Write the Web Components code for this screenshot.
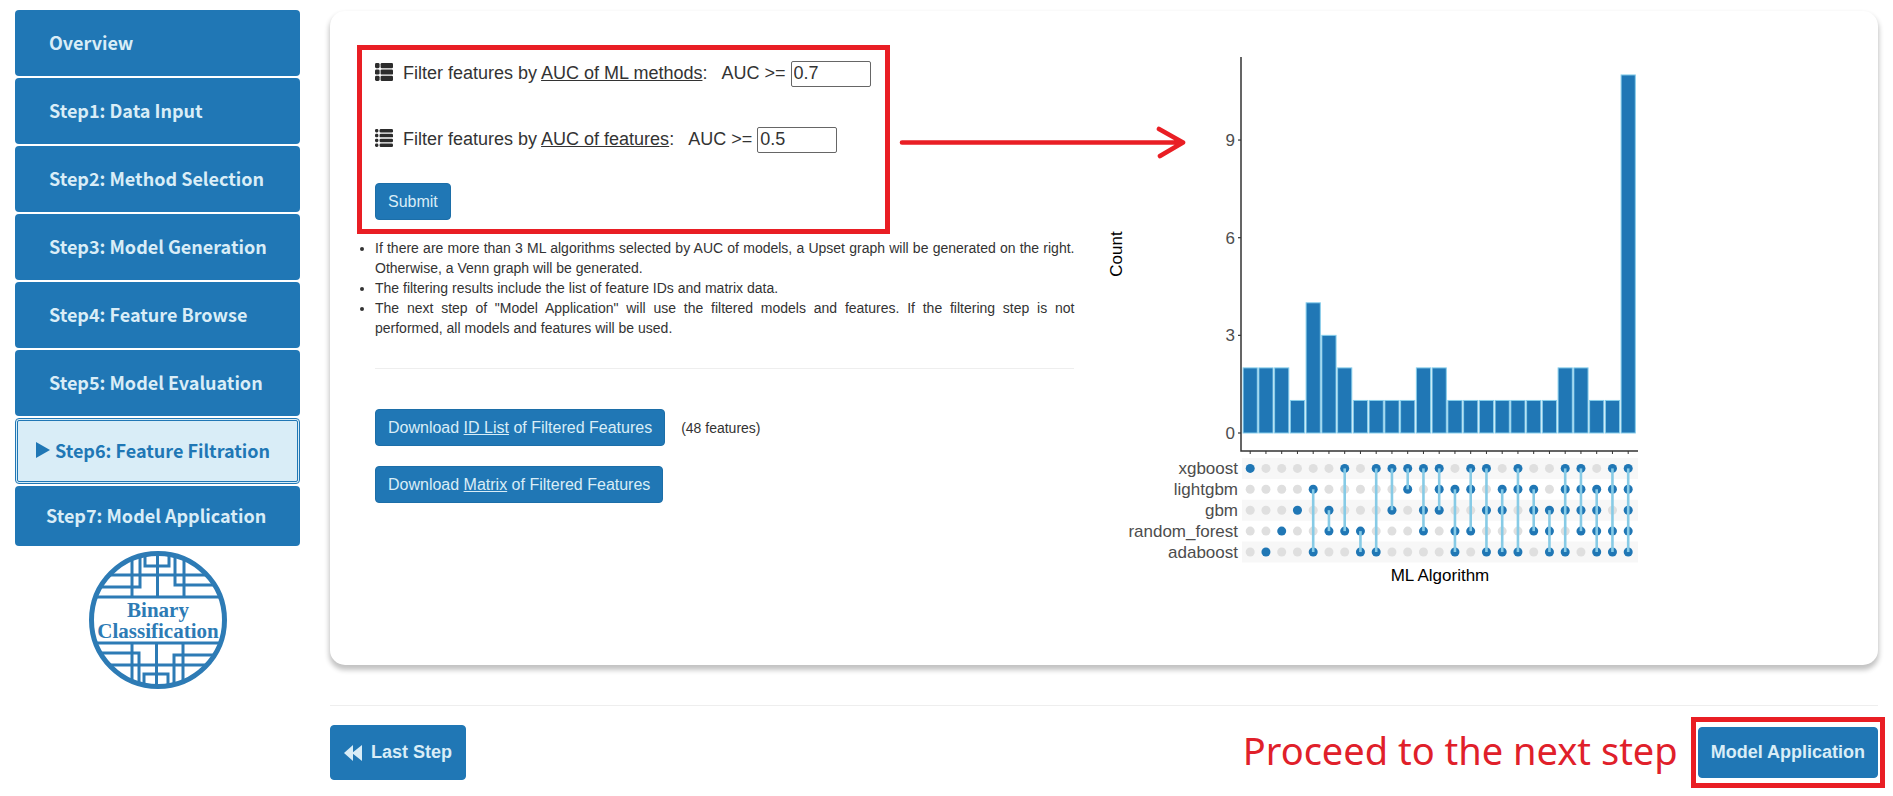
<!DOCTYPE html>
<html lang="en">
<head>
<meta charset="utf-8">
<title>Feature Filtration</title>
<style>
:root{--blue:#2077b5;--pale:#d9edf7;--mark:#e91e24}
body{margin:0;background:#fff;color:#333;font:14px/20px "Liberation Sans",Arial,sans-serif}
</style>
</head>
<body>
<filtration-page></filtration-page>

<script>
const define = (name, html, setup) => {
  const template = document.createElement('template');
  template.innerHTML = html;
  customElements.define(name, class extends HTMLElement {
    constructor() {
      super();
      this.attachShadow({ mode: 'open' }).append(template.content.cloneNode(true));
    }
    connectedCallback() { if (setup) setup(this, this.shadowRoot); }
  });
};

/* One step of the side navigation */
define('step-link', `
<style>
:host{display:block}
a{box-sizing:border-box;display:flex;align-items:center;height:66px;padding:0 34px 2px;border-radius:4px;background:var(--blue);color:var(--pale);font:bold 18px/28px "Noto Sans CJK SC",sans-serif;text-decoration:none;white-space:nowrap}
svg{display:none;flex:none}
:host([active]) a{background:var(--pale);color:var(--blue);border:3px double var(--blue);padding:0 18px 2px;gap:5px}
:host([active]) svg{display:block}
:host([last]) a{height:60px;padding:0 31px 2px}
</style>
<a href="#"><svg width="14" height="16" aria-hidden="true"><path d="M0 0L14 8L0 16Z" fill="currentColor"/></svg><slot></slot></a>`);

/* Round lattice emblem */
define('lattice-logo', `
<style>
:host{display:block}
svg{display:block;margin:auto}
text{font:bold 21px "Liberation Serif",serif;fill:#2d7bb5;text-anchor:middle}
</style>
<svg width="138" height="138" viewBox="0 0 138 138" role="img" aria-label="Binary Classification">
<defs><clipPath id="c"><circle cx="69" cy="69" r="67"/></clipPath></defs>
<g fill="none" stroke="#2d7bb5" stroke-width="3" clip-path="url(#c)">
<path d="M0 46H138M0 92H138"/>
<path d="M15 24H123M68.500 0V46M43 0V46M95 0V46"/>
<path d="M56 0V15H80V0M51 0V36H0M86 0V34H138"/>
<path d="M15 114H123M67.500 92V138M43 92V138M94 92V138"/>
<path d="M55 138V123H79V138M50 138V102H0M85 138V104H138"/>
</g>
<circle cx="69" cy="69" r="66.500" fill="none" stroke="#2d7bb5" stroke-width="5"/>
<text x="69" y="66">Binary</text>
<text x="69" y="87">Classification</text>
</svg>`);

/* Solid button; the size attribute selects the large bold form */
define('app-button', `
<style>
:host{display:block}
button{display:flex;align-items:center;justify-content:center;margin:0;border:1px solid #1c6ea8;border-radius:4px;background:var(--blue);color:var(--pale);font:16px/23px "Liberation Sans",Arial,sans-serif;padding:6px 12px;white-space:nowrap;cursor:pointer}
:host([size=large]) button{font-weight:bold;font-size:18px;line-height:25px;padding:12px 12px;border-color:var(--blue)}
:host([size=wide]) button{font-weight:bold;font-size:18px;line-height:25px;padding:14px 13px;border-color:var(--blue)}
</style>
<button type="button"><slot></slot></button>`);

/* Threshold row: icon, caption and number box */
define('auc-filter', `
<style>
:host{display:flex;align-items:center;font-size:18px;line-height:24px;white-space:nowrap}
svg{width:18px;height:18px;margin-right:10px;margin-bottom:4px;fill:#2c2c2c;flex:none}
label{margin-right:5px;margin-bottom:2px}
input{box-sizing:border-box;width:80px;height:26px;margin:0;padding:0 2px 2px;border:1px solid #666;border-radius:2px;background:#fff;color:#333;font:18px/22px "Liberation Sans",Arial,sans-serif}
</style>
<svg viewBox="0 0 18 18" aria-hidden="true"></svg>
<label for="v">Filter features by <u></u>: &nbsp; AUC &gt;=</label><input id="v" type="text">`,
(host, root) => {
  root.querySelector('u').textContent = host.getAttribute('measure');
  root.querySelector('input').value = host.getAttribute('value');
  const rows = +host.getAttribute('rows');
  const h = rows === 3 ? 5.2 : 3.5;
  const step = (18 - h) / (rows - 1);
  let shapes = '';
  for (let i = 0; i < rows; i++) {
    shapes += `<rect x="0" y="${i * step}" width="${rows === 3 ? 4.6 : 3.4}" height="${h}" rx="1.4"/><rect x="${rows === 3 ? 5.6 : 4.6}" y="${i * step}" width="${rows === 3 ? 12.4 : 13.4}" height="${h}" rx="1.2"/>`;
  }
  root.querySelector('svg').innerHTML = shapes;
});

/* UpSet plot: intersection sizes above, set membership below */
define('upset-plot', `
<style>
:host{display:block}
svg{display:block;max-width:100%}
text{font:17px "Liberation Sans",Arial,sans-serif;fill:#4d4d4d}
.title{fill:#000;text-anchor:middle}
.end{text-anchor:end}
</style>
<svg width="560" height="590" viewBox="0 0 560 590" role="img" aria-label="Upset plot of ML algorithms"></svg>`,
(host, root) => {
  const sets = ['xgboost', 'lightgbm', 'gbm', 'random_forest', 'adaboost'];
  const data = '0:2 4:2 3:2 2:1 14:4 23:3 03:2 34:1 04:1 02:1 01:1 023:2 012:2 134:1 013:1 024:1 124:1 014:1 123:1 234:1 0124:2 0123:2 1234:1 0134:1 01234:11'
    .split(' ').map(s => s.split(':'));
  const cx = i => 146.2 + i * 15.75, cy = j => 423.4 + j * 20.9;
  const base = 388, unit = 32.55;
  let s = '';
  data.forEach(([, n], i) => {
    s += `<rect x="${cx(i) - 7.1}" y="${base - n * unit}" width="14.2" height="${n * unit}" fill="#2077b5" stroke="#87ceeb" stroke-width="1"/>`;
  });
  s += '<path d="M137 12V406H534" fill="none" stroke="#333" stroke-width="1.5"/>';
  [0, 3, 6, 9].forEach(v => {
    const y = base - v * unit;
    s += `<path d="M134 ${y}H137" stroke="#333" stroke-width="1.2"/><text class="end" x="131" y="${y + 6}">${v}</text>`;
  });
  [0, 2, 4].forEach(j => { s += `<rect x="138" y="${cy(j) - 10.5}" width="396" height="21" fill="#f7f7f7"/>`; });
  sets.forEach((name, j) => { s += `<text class="end" x="134" y="${cy(j) + 6}">${name}</text>`; });
  data.forEach(([members], i) => {
    s += `<path d="M${cx(i)} 406V409" stroke="#333"/>`;
    sets.forEach((_, j) => {
      const on = members.includes(j);
      s += `<circle cx="${cx(i)}" cy="${cy(j)}" r="4.5" fill="${on ? '#2077b5' : '#dfdfdf'}"/>`;
    });
    if (members.length > 1) {
      s += `<path d="M${cx(i)} ${cy(+members[0])}V${cy(+members[members.length - 1])}" stroke="#87cbe6" stroke-width="2.6"/>`;
    }
  });
  s += '<text class="title" x="336" y="536">ML Algorithm</text>';
  s += '<text class="title" transform="translate(18 209) rotate(-90)">Count</text>';
  root.querySelector('svg').innerHTML = s;
});

/* White rounded card with the two-column body */
define('content-card', `
<style>
:host{position:relative;display:grid;grid-template-columns:699fr 743fr;gap:30px;padding:34px 30px 30px 45px;border-radius:15px;background:#fff;box-shadow:0 4px 5px 1px rgba(0,0,0,.24)}
</style>
<slot></slot>`);

/* Red frame that draws attention to its content */
define('mark-frame', `
<style>
:host{display:block;box-sizing:border-box;width:fit-content;border:5px solid var(--mark)}
</style>
<slot></slot>`);

define('filtration-page', `
<style>
:host{display:grid;grid-template-columns:315px minmax(0,1fr)}
nav{padding:10px 15px;display:flex;flex-direction:column;gap:2px}
lattice-logo{margin-top:3px}
main{padding:11px 15px 0}
.filters{margin-left:-18px;padding:11px 14px 9px 13px}
auc-filter + auc-filter{margin-top:40px}
.submit{width:fit-content;margin-top:30px}
ul{margin:4px 0 0;padding:0;text-align:justify}
hr{border:0;border-top:1px solid #eee;margin:30px 0 40px}
.row{display:flex;align-items:center;gap:16px;margin-bottom:20px}
.arrow{position:absolute;left:568px;top:114px}
.divider{margin:40px 0 11px}
footer{display:flex;align-items:center}
.hint{margin:0 13px 6px auto;color:#e0202a;font:38px/48px "Noto Sans",sans-serif;white-space:nowrap}
.next{margin-right:-7px;padding:5px 2px}
.rewind{margin-right:9px}
</style>
<nav aria-label="Steps">
<step-link>Overview</step-link>
<step-link>Step1: Data Input</step-link>
<step-link>Step2: Method Selection</step-link>
<step-link>Step3: Model Generation</step-link>
<step-link>Step4: Feature Browse</step-link>
<step-link>Step5: Model Evaluation</step-link>
<step-link active>Step6: Feature Filtration</step-link>
<step-link last>Step7: Model Application</step-link>
<lattice-logo></lattice-logo>
</nav>
<main>
<content-card>
<section>
<mark-frame class="filters">
<auc-filter measure="AUC of ML methods" value="0.7" rows="3"></auc-filter>
<auc-filter measure="AUC of features" value="0.5" rows="4"></auc-filter>
<app-button class="submit">Submit</app-button>
</mark-frame>
<ul>
<li>If there are more than 3 ML algorithms selected by AUC of models, a Upset graph will be generated on the right. Otherwise, a Venn graph will be generated.</li>
<li>The filtering results include the list of feature IDs and matrix data.</li>
<li>The next step of "Model Application" will use the filtered models and features. If the filtering step is not performed, all models and features will be used.</li>
</ul>
<hr>
<div class="row"><app-button><span>Download <u>ID List</u> of Filtered Features</span></app-button><span>(48 features)</span></div>
<div class="row"><app-button><span>Download <u>Matrix</u> of Filtered Features</span></app-button></div>
</section>
<upset-plot></upset-plot>
<svg class="arrow" width="290" height="36" viewBox="0 0 290 36" fill="none" stroke="#e91e24" stroke-width="4.600" stroke-linecap="round" stroke-linejoin="round" aria-hidden="true"><path d="M4 17.500H285M261 4L285 17.500L262 31"/></svg>
</content-card>
<hr class="divider">
<footer>
<app-button size="wide"><svg class="rewind" width="18" height="18" viewBox="0 0 18 18" aria-hidden="true"><path d="M9 1V17L0 9ZM18 1V17L8 9Z" fill="#d9edf7"/></svg>Last Step</app-button>
<span class="hint">Proceed to the next step</span>
<mark-frame class="next"><app-button size="large">Model Application</app-button></mark-frame>
</footer>
</main>`);
</script>
</body>
</html>
